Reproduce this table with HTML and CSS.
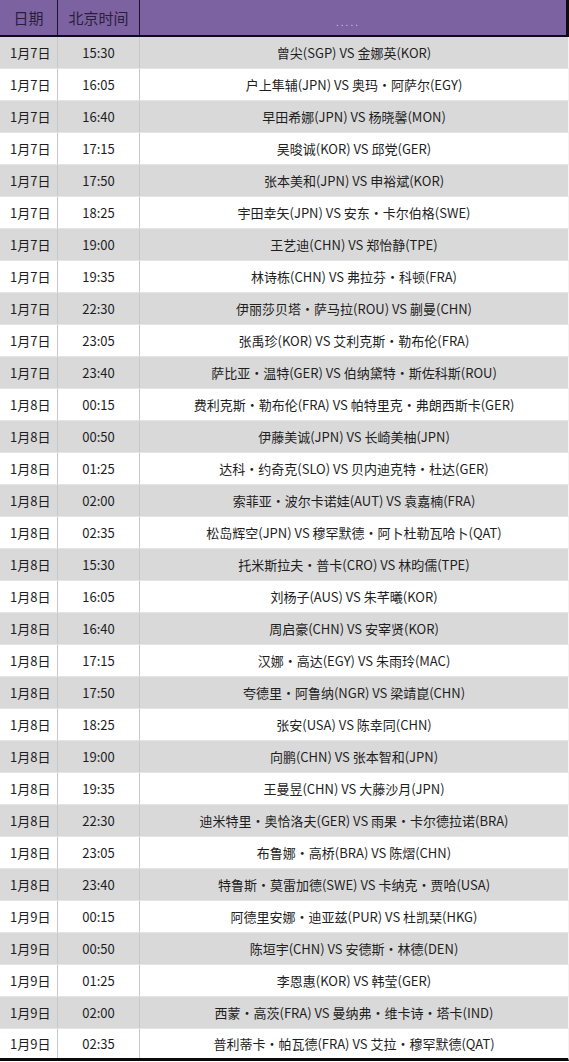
FILE: index.html
```html
<!DOCTYPE html>
<html lang="zh">
<head>
<meta charset="utf-8">
<link rel="stylesheet" href="styles.css">
</head>
<body>
<div class="table">
  <div class="head">
    <div class="hc c1">日期</div>
    <div class="hc c2">北京时间</div>
    <div class="hc c3"><span class="wm">.....</span></div>
  </div>
  <div class="row"><div class="c1">1月7日</div><div class="c2">15:30</div><div class="c3">曾尖(SGP) VS 金娜英(KOR)</div></div>
  <div class="row"><div class="c1">1月7日</div><div class="c2">16:05</div><div class="c3">户上隼辅(JPN) VS 奥玛・阿萨尔(EGY)</div></div>
  <div class="row"><div class="c1">1月7日</div><div class="c2">16:40</div><div class="c3">早田希娜(JPN) VS 杨晓馨(MON)</div></div>
  <div class="row"><div class="c1">1月7日</div><div class="c2">17:15</div><div class="c3">吴晙诚(KOR) VS 邱党(GER)</div></div>
  <div class="row"><div class="c1">1月7日</div><div class="c2">17:50</div><div class="c3">张本美和(JPN) VS 申裕斌(KOR)</div></div>
  <div class="row"><div class="c1">1月7日</div><div class="c2">18:25</div><div class="c3">宇田幸矢(JPN) VS 安东・卡尔伯格(SWE)</div></div>
  <div class="row"><div class="c1">1月7日</div><div class="c2">19:00</div><div class="c3">王艺迪(CHN) VS 郑怡静(TPE)</div></div>
  <div class="row"><div class="c1">1月7日</div><div class="c2">19:35</div><div class="c3">林诗栋(CHN) VS 弗拉芬・科顿(FRA)</div></div>
  <div class="row"><div class="c1">1月7日</div><div class="c2">22:30</div><div class="c3">伊丽莎贝塔・萨马拉(ROU) VS 蒯曼(CHN)</div></div>
  <div class="row"><div class="c1">1月7日</div><div class="c2">23:05</div><div class="c3">张禹珍(KOR) VS 艾利克斯・勒布伦(FRA)</div></div>
  <div class="row"><div class="c1">1月7日</div><div class="c2">23:40</div><div class="c3">萨比亚・温特(GER) VS 伯纳黛特・斯佐科斯(ROU)</div></div>
  <div class="row"><div class="c1">1月8日</div><div class="c2">00:15</div><div class="c3">费利克斯・勒布伦(FRA) VS 帕特里克・弗朗西斯卡(GER)</div></div>
  <div class="row"><div class="c1">1月8日</div><div class="c2">00:50</div><div class="c3">伊藤美诚(JPN) VS 长崎美柚(JPN)</div></div>
  <div class="row"><div class="c1">1月8日</div><div class="c2">01:25</div><div class="c3">达科・约奇克(SLO) VS 贝内迪克特・杜达(GER)</div></div>
  <div class="row"><div class="c1">1月8日</div><div class="c2">02:00</div><div class="c3">索菲亚・波尔卡诺娃(AUT) VS 袁嘉楠(FRA)</div></div>
  <div class="row"><div class="c1">1月8日</div><div class="c2">02:35</div><div class="c3">松岛辉空(JPN) VS 穆罕默德・阿卜杜勒瓦哈卜(QAT)</div></div>
  <div class="row"><div class="c1">1月8日</div><div class="c2">15:30</div><div class="c3">托米斯拉夫・普卡(CRO) VS 林昀儒(TPE)</div></div>
  <div class="row"><div class="c1">1月8日</div><div class="c2">16:05</div><div class="c3">刘杨子(AUS) VS 朱芊曦(KOR)</div></div>
  <div class="row"><div class="c1">1月8日</div><div class="c2">16:40</div><div class="c3">周启豪(CHN) VS 安宰贤(KOR)</div></div>
  <div class="row"><div class="c1">1月8日</div><div class="c2">17:15</div><div class="c3">汉娜・高达(EGY) VS 朱雨玲(MAC)</div></div>
  <div class="row"><div class="c1">1月8日</div><div class="c2">17:50</div><div class="c3">夸德里・阿鲁纳(NGR) VS 梁靖崑(CHN)</div></div>
  <div class="row"><div class="c1">1月8日</div><div class="c2">18:25</div><div class="c3">张安(USA) VS 陈幸同(CHN)</div></div>
  <div class="row"><div class="c1">1月8日</div><div class="c2">19:00</div><div class="c3">向鹏(CHN) VS 张本智和(JPN)</div></div>
  <div class="row"><div class="c1">1月8日</div><div class="c2">19:35</div><div class="c3">王曼昱(CHN) VS 大藤沙月(JPN)</div></div>
  <div class="row"><div class="c1">1月8日</div><div class="c2">22:30</div><div class="c3">迪米特里・奥恰洛夫(GER) VS 雨果・卡尔德拉诺(BRA)</div></div>
  <div class="row"><div class="c1">1月8日</div><div class="c2">23:05</div><div class="c3">布鲁娜・高桥(BRA) VS 陈熠(CHN)</div></div>
  <div class="row"><div class="c1">1月8日</div><div class="c2">23:40</div><div class="c3">特鲁斯・莫雷加德(SWE) VS 卡纳克・贾哈(USA)</div></div>
  <div class="row"><div class="c1">1月9日</div><div class="c2">00:15</div><div class="c3">阿德里安娜・迪亚兹(PUR) VS 杜凯琹(HKG)</div></div>
  <div class="row"><div class="c1">1月9日</div><div class="c2">00:50</div><div class="c3">陈垣宇(CHN) VS 安德斯・林德(DEN)</div></div>
  <div class="row"><div class="c1">1月9日</div><div class="c2">01:25</div><div class="c3">李恩惠(KOR) VS 韩莹(GER)</div></div>
  <div class="row"><div class="c1">1月9日</div><div class="c2">02:00</div><div class="c3">西蒙・高茨(FRA) VS 曼纳弗・维卡诗・塔卡(IND)</div></div>
  <div class="row last"><div class="c1">1月9日</div><div class="c2">02:35</div><div class="c3">普利蒂卡・帕瓦德(FRA) VS 艾拉・穆罕默德(QAT)</div></div>
</div>
</body>
</html>
```
FILE: styles.css
```css
html, body {
  margin: 0;
  padding: 0;
  background: #ffffff;
}
body {
  font-family: "Noto Sans CJK SC", "Noto Sans", sans-serif;
  color: #1e1e1e;
  overflow: hidden;
}
.table {
  width: 569px;
  height: 1062px;
  display: flex;
  flex-direction: column;
  overflow: hidden;
}
.head {
  display: grid;
  grid-template-columns: 58px 82px 1fr;
  height: 35px;
  background: #7d62a2;
  border-bottom: 2px solid #0f0a16;
  border-right: 3px solid #0f0a16;
}
.hc {
  display: flex;
  align-items: center;
  justify-content: center;
  font-size: 15px;
  color: #2a1e3c;
}
.head .c1, .head .c2 {
  border-right: 1px solid #1c1428;
}
.wm {
  color: rgba(235, 228, 245, 0.75);
  font-size: 10px;
  letter-spacing: 2px;
  filter: blur(0.5px);
  position: relative;
  top: 4px;
  left: -5px;
}
.row {
  display: grid;
  grid-template-columns: 58px 82px 1fr;
  height: 31px;
  border-bottom: 1px solid #e4e4e4;
  border-right: 1px solid #f4f4f4;
  font-size: 13px;
}
.row:nth-child(even) {
  background: #d9d9d9;
}
.row > div {
  display: flex;
  align-items: center;
  justify-content: center;
  white-space: nowrap;
}
.row .c1, .row .c2 {
  border-right: 1px solid #c8c8c8;
}
.row .c1 {
  justify-content: flex-start;
  padding-left: 10px;
}
.row.last {
  height: 29px;
  border-bottom: 3px solid #0a0a0a;
}
```
